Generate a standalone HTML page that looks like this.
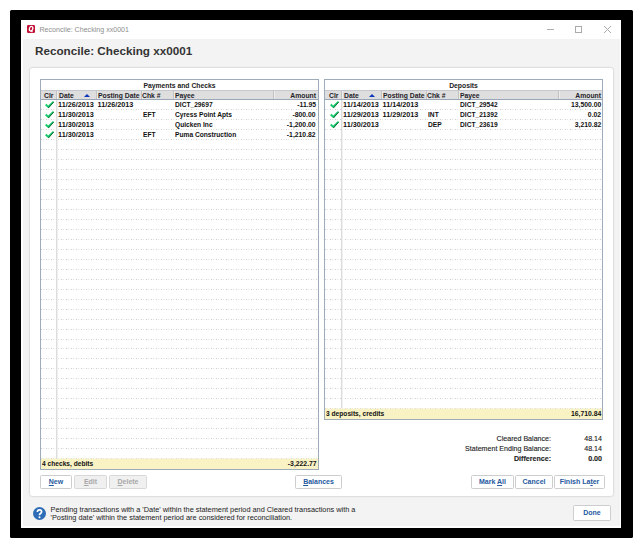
<!DOCTYPE html><html><head><meta charset="utf-8"><style>
*{margin:0;padding:0;box-sizing:content-box}
html,body{width:643px;height:548px;overflow:hidden;background:#fff;position:relative;font-family:"Liberation Sans", sans-serif}
div,svg{position:absolute}
.frame{left:10px;top:10px;width:623px;height:528px;background:#000;border-radius:1.5px}
.win{left:21px;top:20px;width:600px;height:508px;background:#fff}
.content{left:23px;top:39px;width:597px;height:487px;background:#f3f3f3}
.qi{left:27px;top:25px;width:8px;height:8px;background:#c2133a;border-radius:1.5px;color:#fff;font-size:7px;font-weight:bold;font-style:italic;line-height:8px;text-align:center}
.wt{left:39.5px;top:25.5px;font-size:7.1px;color:#8e8e8e;white-space:nowrap;line-height:9px}
.hd{left:35px;top:44px;font-size:11.7px;font-weight:bold;color:#333;white-space:nowrap;line-height:14px}
.panel{left:29px;top:67px;width:583px;height:428px;background:#fff;border:1px solid #dfdfdf;border-radius:3.5px;box-shadow:0 0 0 0.5px #ebebeb}
.tb{border:1px solid #9eabbb;background:#fff}
.ttl{text-align:center;font-size:6.8px;font-weight:bold;color:#222;line-height:9px;white-space:nowrap}
.hdr{height:8px;border-top:1px solid #c5c9cf;border-bottom:1px solid #98a6b7;background:#dedede}
.hs{width:1px;height:8px;background:#c2c2c2;box-shadow:1px 0 0 #ededed}
.ht{font-size:6.8px;font-weight:bold;color:#1f232a;line-height:9px;white-space:nowrap}
.rt{font-size:7.25px;font-weight:bold;color:#111;line-height:9px;white-space:nowrap}
.r{text-align:right}
.rt.sx{transform:scaleX(0.915);transform-origin:0 0}
.rt.sxr{transform:scaleX(0.94);transform-origin:100% 0}
.tri{width:0;height:0;border-left:3px solid transparent;border-right:3px solid transparent;border-bottom:3.5px solid #0d36b8}
.dl{height:1px;background:repeating-linear-gradient(90deg,#cfcfcf 0 1px,#fbfbfb 1px 2px,#e6e6e6 2px 3px,#fbfbfb 3px 5px)}
.vl{width:1px;background:#dcdcdc;box-shadow:1px 0 0 #f0f0f0}
.ft{height:11px;background:#f9f2c4}
.btn{height:12px;border:1px solid #cdcdcd;background:#fff;border-radius:1.5px;font-size:7px;font-weight:bold;color:#2559a0;text-align:center;line-height:12px;white-space:nowrap}
.btn.dis{background:#f0f0f0;color:#a8a8a8;border-color:#d8d8d8}
.u{text-decoration:underline;text-decoration-thickness:0.6px;text-underline-offset:0.6px}
.bl{font-size:7.1px;color:#222;-webkit-text-stroke:0.12px #222;line-height:9px;white-space:nowrap;text-align:right}
.info{left:50.5px;top:505.5px;font-size:7.35px;color:#222;line-height:8px;white-space:nowrap}
.help{left:33px;top:507px;width:13px;height:13px;border-radius:50%;background:#2f6db8;color:#fff;font-size:11px;font-weight:bold;line-height:13px;text-align:center}
.ctl{background:#ababab}
</style></head><body><div class="frame"></div><div class="win"></div><div class="content"></div>
<svg style="left:27px;top:25px" width="8" height="8" viewBox="0 0 8 8"><rect width="8" height="8" rx="1.2" fill="#c41136"/><ellipse cx="4.1" cy="3.7" rx="1.65" ry="2.35" transform="rotate(20 4.1 3.7)" fill="none" stroke="#fff" stroke-width="1.25"/><path d="M4.2 5.6 L5.4 7.1" stroke="#fff" stroke-width="1.1"/></svg><div class="wt">Reconcile: Checking xx0001</div>
<div class="ctl" style="left:547px;top:29px;width:7px;height:1px"></div>
<div style="left:575px;top:26px;width:5px;height:5px;border:1px solid #ababab"></div>
<svg style="left:603px;top:25px" width="9" height="9" viewBox="0 0 9 9"><path d="M1 1L8 8M8 1L1 8" stroke="#ababab" stroke-width="1"/></svg>
<div class="hd">Reconcile: Checking xx0001</div>
<div class="panel"></div>
<div class="tb" style="left:40px;top:79px;width:277px;height:389px"></div>
<div class="ttl" style="left:41px;top:81px;width:277px">Payments and Checks</div>
<div class="hdr" style="left:41px;top:90px;width:277px"></div>
<div class="hs" style="left:56px;top:91px"></div>
<div class="hs" style="left:96px;top:91px"></div>
<div class="hs" style="left:141px;top:91px"></div>
<div class="hs" style="left:173px;top:91px"></div>
<div class="hs" style="left:273px;top:91px"></div>
<div class="ht" style="left:44px;top:91px">Clr</div>
<div class="ht" style="left:59px;top:91px">Date</div>
<div class="tri" style="left:84px;top:94px"></div>
<div class="ht" style="left:98px;top:91px">Posting Date</div>
<div class="ht" style="left:142px;top:91px">Chk #</div>
<div class="ht" style="left:175px;top:91px">Payee</div>
<div class="ht r" style="right:327px;top:91px">Amount</div>
<div class="dl" style="left:41px;top:109px;width:277px"></div>
<div class="dl" style="left:41px;top:119px;width:277px"></div>
<div class="dl" style="left:41px;top:129px;width:277px"></div>
<div class="dl" style="left:41px;top:139px;width:277px"></div>
<div class="dl" style="left:41px;top:149px;width:277px"></div>
<div class="dl" style="left:41px;top:159px;width:277px"></div>
<div class="dl" style="left:41px;top:169px;width:277px"></div>
<div class="dl" style="left:41px;top:179px;width:277px"></div>
<div class="dl" style="left:41px;top:189px;width:277px"></div>
<div class="dl" style="left:41px;top:199px;width:277px"></div>
<div class="dl" style="left:41px;top:209px;width:277px"></div>
<div class="dl" style="left:41px;top:219px;width:277px"></div>
<div class="dl" style="left:41px;top:229px;width:277px"></div>
<div class="dl" style="left:41px;top:239px;width:277px"></div>
<div class="dl" style="left:41px;top:249px;width:277px"></div>
<div class="dl" style="left:41px;top:259px;width:277px"></div>
<div class="dl" style="left:41px;top:269px;width:277px"></div>
<div class="dl" style="left:41px;top:279px;width:277px"></div>
<div class="dl" style="left:41px;top:289px;width:277px"></div>
<div class="dl" style="left:41px;top:299px;width:277px"></div>
<div class="dl" style="left:41px;top:309px;width:277px"></div>
<div class="dl" style="left:41px;top:319px;width:277px"></div>
<div class="dl" style="left:41px;top:329px;width:277px"></div>
<div class="dl" style="left:41px;top:339px;width:277px"></div>
<div class="dl" style="left:41px;top:348px;width:277px"></div>
<div class="dl" style="left:41px;top:358px;width:277px"></div>
<div class="dl" style="left:41px;top:368px;width:277px"></div>
<div class="dl" style="left:41px;top:378px;width:277px"></div>
<div class="dl" style="left:41px;top:388px;width:277px"></div>
<div class="dl" style="left:41px;top:398px;width:277px"></div>
<div class="dl" style="left:41px;top:408px;width:277px"></div>
<div class="dl" style="left:41px;top:418px;width:277px"></div>
<div class="dl" style="left:41px;top:428px;width:277px"></div>
<div class="dl" style="left:41px;top:438px;width:277px"></div>
<div class="dl" style="left:41px;top:448px;width:277px"></div>
<div class="dl" style="left:41px;top:458px;width:277px"></div>
<div class="vl" style="left:56px;top:100px;height:358px"></div>
<svg class="ck" style="left:44px;top:100px" width="11" height="10" viewBox="0 0 11 10"><path d="M1.0 5.3 L2.5 3.8 L4.2 5.4 L9.0 1.1 L9.9 2.0 L4.4 8.3 Z" fill="#17c468"/><path d="M9.7 2.1 L4.4 8.0" stroke="#0a6e35" stroke-width="1.0" fill="none"/><path d="M2.4 4.6 L4.2 6.3" stroke="#2de08a" stroke-width="0.8" fill="none" opacity=".7"/></svg>
<div class="rt" style="left:58px;top:100px">11/26/2013</div>
<div class="rt" style="left:97.5px;top:100px">11/26/2013</div>
<div class="rt sx" style="left:175px;top:100px">DICT_29697</div>
<div class="rt r sxr" style="right:327px;top:100px">-11.95</div>
<svg class="ck" style="left:44px;top:110px" width="11" height="10" viewBox="0 0 11 10"><path d="M1.0 5.3 L2.5 3.8 L4.2 5.4 L9.0 1.1 L9.9 2.0 L4.4 8.3 Z" fill="#17c468"/><path d="M9.7 2.1 L4.4 8.0" stroke="#0a6e35" stroke-width="1.0" fill="none"/><path d="M2.4 4.6 L4.2 6.3" stroke="#2de08a" stroke-width="0.8" fill="none" opacity=".7"/></svg>
<div class="rt" style="left:58px;top:110px">11/30/2013</div>
<div class="rt sx" style="left:142.5px;top:110px">EFT</div>
<div class="rt sx" style="left:175px;top:110px">Cyress Point Apts</div>
<div class="rt r sxr" style="right:327px;top:110px">-800.00</div>
<svg class="ck" style="left:44px;top:120px" width="11" height="10" viewBox="0 0 11 10"><path d="M1.0 5.3 L2.5 3.8 L4.2 5.4 L9.0 1.1 L9.9 2.0 L4.4 8.3 Z" fill="#17c468"/><path d="M9.7 2.1 L4.4 8.0" stroke="#0a6e35" stroke-width="1.0" fill="none"/><path d="M2.4 4.6 L4.2 6.3" stroke="#2de08a" stroke-width="0.8" fill="none" opacity=".7"/></svg>
<div class="rt" style="left:58px;top:120px">11/30/2013</div>
<div class="rt sx" style="left:175px;top:120px">Quicken Inc</div>
<div class="rt r sxr" style="right:327px;top:120px">-1,200.00</div>
<svg class="ck" style="left:44px;top:130px" width="11" height="10" viewBox="0 0 11 10"><path d="M1.0 5.3 L2.5 3.8 L4.2 5.4 L9.0 1.1 L9.9 2.0 L4.4 8.3 Z" fill="#17c468"/><path d="M9.7 2.1 L4.4 8.0" stroke="#0a6e35" stroke-width="1.0" fill="none"/><path d="M2.4 4.6 L4.2 6.3" stroke="#2de08a" stroke-width="0.8" fill="none" opacity=".7"/></svg>
<div class="rt" style="left:58px;top:130px">11/30/2013</div>
<div class="rt sx" style="left:142.5px;top:130px">EFT</div>
<div class="rt sx" style="left:175px;top:130px">Puma Construction</div>
<div class="rt r sxr" style="right:327px;top:130px">-1,210.82</div>
<div class="ft" style="left:41px;top:458px;width:277px"></div>
<div class="dl" style="left:41px;top:458px;width:277px;opacity:.6"></div>
<div class="rt sx" style="left:42px;top:459px">4 checks, debits</div>
<div class="rt r sxr" style="right:326px;top:459px">-3,222.77</div>
<div class="tb" style="left:324px;top:79px;width:277px;height:339px"></div>
<div class="ttl" style="left:325px;top:81px;width:277px">Deposits</div>
<div class="hdr" style="left:325px;top:90px;width:277px"></div>
<div class="hs" style="left:341px;top:91px"></div>
<div class="hs" style="left:381px;top:91px"></div>
<div class="hs" style="left:426px;top:91px"></div>
<div class="hs" style="left:458px;top:91px"></div>
<div class="hs" style="left:558px;top:91px"></div>
<div class="ht" style="left:329px;top:91px">Clr</div>
<div class="ht" style="left:344px;top:91px">Date</div>
<div class="tri" style="left:369px;top:94px"></div>
<div class="ht" style="left:383px;top:91px">Posting Date</div>
<div class="ht" style="left:427px;top:91px">Chk #</div>
<div class="ht" style="left:460px;top:91px">Payee</div>
<div class="ht r" style="right:42px;top:91px">Amount</div>
<div class="dl" style="left:325px;top:109px;width:277px"></div>
<div class="dl" style="left:325px;top:119px;width:277px"></div>
<div class="dl" style="left:325px;top:129px;width:277px"></div>
<div class="dl" style="left:325px;top:139px;width:277px"></div>
<div class="dl" style="left:325px;top:149px;width:277px"></div>
<div class="dl" style="left:325px;top:159px;width:277px"></div>
<div class="dl" style="left:325px;top:169px;width:277px"></div>
<div class="dl" style="left:325px;top:179px;width:277px"></div>
<div class="dl" style="left:325px;top:189px;width:277px"></div>
<div class="dl" style="left:325px;top:199px;width:277px"></div>
<div class="dl" style="left:325px;top:209px;width:277px"></div>
<div class="dl" style="left:325px;top:219px;width:277px"></div>
<div class="dl" style="left:325px;top:229px;width:277px"></div>
<div class="dl" style="left:325px;top:239px;width:277px"></div>
<div class="dl" style="left:325px;top:249px;width:277px"></div>
<div class="dl" style="left:325px;top:259px;width:277px"></div>
<div class="dl" style="left:325px;top:269px;width:277px"></div>
<div class="dl" style="left:325px;top:279px;width:277px"></div>
<div class="dl" style="left:325px;top:289px;width:277px"></div>
<div class="dl" style="left:325px;top:299px;width:277px"></div>
<div class="dl" style="left:325px;top:309px;width:277px"></div>
<div class="dl" style="left:325px;top:319px;width:277px"></div>
<div class="dl" style="left:325px;top:329px;width:277px"></div>
<div class="dl" style="left:325px;top:339px;width:277px"></div>
<div class="dl" style="left:325px;top:348px;width:277px"></div>
<div class="dl" style="left:325px;top:358px;width:277px"></div>
<div class="dl" style="left:325px;top:368px;width:277px"></div>
<div class="dl" style="left:325px;top:378px;width:277px"></div>
<div class="dl" style="left:325px;top:388px;width:277px"></div>
<div class="dl" style="left:325px;top:398px;width:277px"></div>
<div class="dl" style="left:325px;top:408px;width:277px"></div>
<div class="vl" style="left:341px;top:100px;height:308px"></div>
<svg class="ck" style="left:329px;top:100px" width="11" height="10" viewBox="0 0 11 10"><path d="M1.0 5.3 L2.5 3.8 L4.2 5.4 L9.0 1.1 L9.9 2.0 L4.4 8.3 Z" fill="#17c468"/><path d="M9.7 2.1 L4.4 8.0" stroke="#0a6e35" stroke-width="1.0" fill="none"/><path d="M2.4 4.6 L4.2 6.3" stroke="#2de08a" stroke-width="0.8" fill="none" opacity=".7"/></svg>
<div class="rt" style="left:343px;top:100px">11/14/2013</div>
<div class="rt" style="left:382.5px;top:100px">11/14/2013</div>
<div class="rt sx" style="left:460px;top:100px">DICT_29542</div>
<div class="rt r sxr" style="right:42px;top:100px">13,500.00</div>
<svg class="ck" style="left:329px;top:110px" width="11" height="10" viewBox="0 0 11 10"><path d="M1.0 5.3 L2.5 3.8 L4.2 5.4 L9.0 1.1 L9.9 2.0 L4.4 8.3 Z" fill="#17c468"/><path d="M9.7 2.1 L4.4 8.0" stroke="#0a6e35" stroke-width="1.0" fill="none"/><path d="M2.4 4.6 L4.2 6.3" stroke="#2de08a" stroke-width="0.8" fill="none" opacity=".7"/></svg>
<div class="rt" style="left:343px;top:110px">11/29/2013</div>
<div class="rt" style="left:382.5px;top:110px">11/29/2013</div>
<div class="rt sx" style="left:427.5px;top:110px">INT</div>
<div class="rt sx" style="left:460px;top:110px">DICT_21392</div>
<div class="rt r sxr" style="right:42px;top:110px">0.02</div>
<svg class="ck" style="left:329px;top:120px" width="11" height="10" viewBox="0 0 11 10"><path d="M1.0 5.3 L2.5 3.8 L4.2 5.4 L9.0 1.1 L9.9 2.0 L4.4 8.3 Z" fill="#17c468"/><path d="M9.7 2.1 L4.4 8.0" stroke="#0a6e35" stroke-width="1.0" fill="none"/><path d="M2.4 4.6 L4.2 6.3" stroke="#2de08a" stroke-width="0.8" fill="none" opacity=".7"/></svg>
<div class="rt" style="left:343px;top:120px">11/30/2013</div>
<div class="rt sx" style="left:427.5px;top:120px">DEP</div>
<div class="rt sx" style="left:460px;top:120px">DICT_23619</div>
<div class="rt r sxr" style="right:42px;top:120px">3,210.82</div>
<div class="ft" style="left:325px;top:408px;width:277px"></div>
<div class="dl" style="left:325px;top:408px;width:277px;opacity:.6"></div>
<div class="rt sx" style="left:326px;top:409px">3 deposits, credits</div>
<div class="rt r sxr" style="right:42px;top:409px">16,710.84</div>
<div class="btn " style="left:40px;top:475px;width:30px;height:12px;line-height:12px"><span class="u">N</span>ew</div>
<div class="btn dis" style="left:74px;top:475px;width:31px;height:12px;line-height:12px"><span class="u">E</span>dit</div>
<div class="btn dis" style="left:109px;top:475px;width:36px;height:12px;line-height:12px"><span class="u">D</span>elete</div>
<div class="btn " style="left:295px;top:475px;width:45px;height:12px;line-height:12px"><span class="u">B</span>alances</div>
<div class="btn " style="left:471px;top:475px;width:41px;height:12px;line-height:12px">Mark <span class="u">A</span>ll</div>
<div class="btn " style="left:515px;top:475px;width:36px;height:12px;line-height:12px">Cancel</div>
<div class="btn " style="left:554px;top:475px;width:49px;height:12px;line-height:12px">Finish La<span class="u">t</span>er</div>
<div class="btn " style="left:573px;top:505px;width:36px;height:14px;line-height:14px">Done</div>
<div class="bl" style="right:92px;top:435px">Cleared Balance:</div>
<div class="bl" style="right:92px;top:445px">Statement Ending Balance:</div>
<div class="bl" style="right:92px;top:455px;font-weight:bold">Difference:</div>
<div class="bl" style="right:41px;top:435px">48.14</div>
<div class="bl" style="right:41px;top:445px">48.14</div>
<div class="bl" style="right:41px;top:455px;font-weight:bold">0.00</div>
<svg style="left:33px;top:507px" width="13" height="13" viewBox="0 0 13 13"><circle cx="6.5" cy="6.5" r="6.5" fill="#2d6cb6"/><path d="M4.4 5.0 Q4.4 2.9 6.5 2.9 Q8.6 2.9 8.6 4.8 Q8.6 5.9 7.4 6.5 Q6.5 7.0 6.5 8.3" stroke="#fff" stroke-width="1.7" fill="none"/><circle cx="6.5" cy="10.3" r="1.0" fill="#fff"/></svg>
<div class="info">Pending transactions with a 'Date' within the statement period and Cleared transactions with a<br>'Posting date' within the statement period are considered for reconciliation.</div></body></html>
